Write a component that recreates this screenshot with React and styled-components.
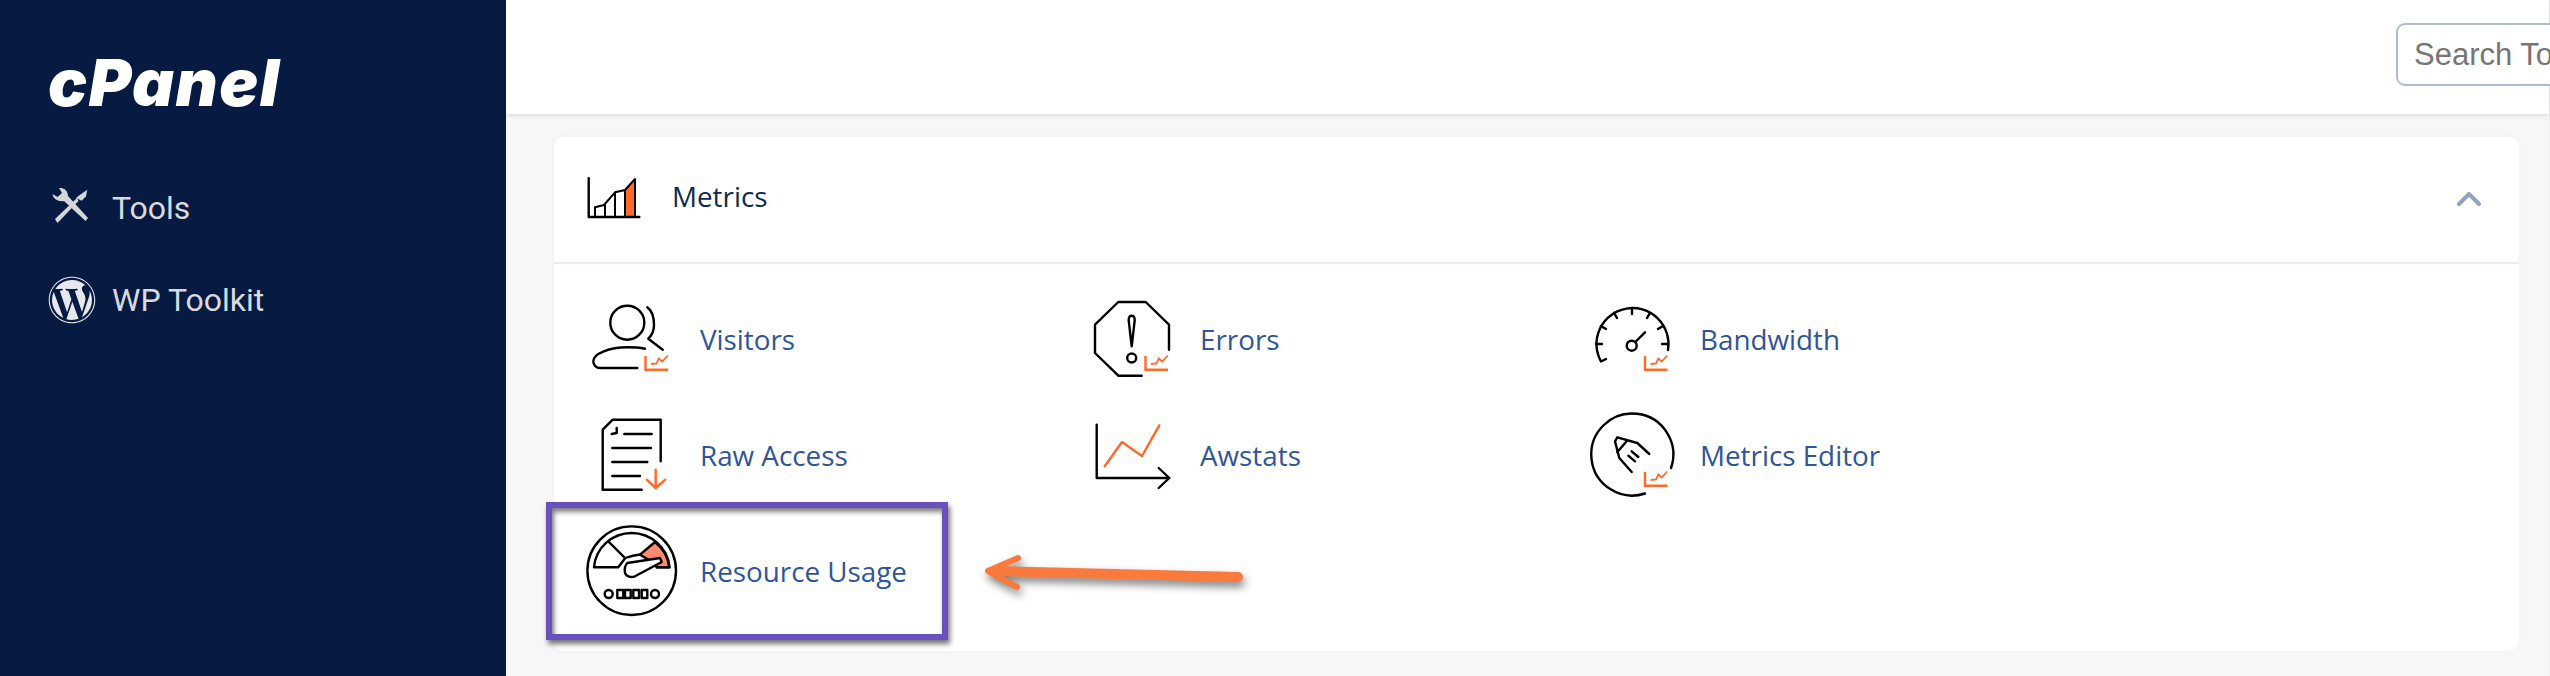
import React from "react";
import styled, { createGlobalStyle } from "styled-components";
import { FaWordpress } from "react-icons/fa";

const GlobalStyle = createGlobalStyle`
  html, body {
    margin: 0;
    padding: 0;
    background: #f7f7f8;
  }
`;

const Page = styled.div`
  display: flex;
  width: 2550px;
  height: 676px;
  overflow: hidden;
`;

const Sidebar = styled.aside`
  width: 506px;
  flex-shrink: 0;
  background: #061a42;
  padding: 48px 0 0 48px;
  box-sizing: border-box;
`;

const Logo = styled.div`
  font-family: "Inter", sans-serif;
  font-weight: 900;
  font-style: italic;
  font-size: 65px;
  line-height: 70px;
  letter-spacing: 1.5px;
  color: #fff;
  height: 70px;
  margin-bottom: 66px;
`;

const Nav = styled.nav`
  display: flex;
  flex-direction: column;
  gap: 44px;
`;

const NavItem = styled.a`
  display: flex;
  align-items: center;
  gap: 16px;
  height: 48px;
  font-family: "Roboto", sans-serif;
  font-size: 32px;
  color: #d9dadd;

  svg {
    width: 48px;
    height: 48px;
    flex-shrink: 0;
    fill: #e6e8ed;
  }
`;

const Main = styled.main`
  flex: 1;
  min-width: 0;
  display: flex;
  flex-direction: column;
  border-right: 1px solid #ececec;
`;

const TopBar = styled.header`
  height: 114px;
  flex-shrink: 0;
  background: #fff;
  box-shadow: 0 1px 5px rgba(0, 0, 0, 0.14);
  display: flex;
  align-items: flex-start;
  justify-content: flex-end;
  padding-top: 23px;
  box-sizing: border-box;
  position: relative;
`;

const Search = styled.input`
  width: 300px;
  height: 63px;
  margin-right: -147px;
  box-sizing: border-box;
  border: 2px solid #b0bcd4;
  border-radius: 9px;
  padding: 0 16px;
  font-family: "Liberation Sans", sans-serif;
  font-size: 31px;
  outline: none;
  background: #fff;
`;

const Content = styled.div`
  padding: 23px 30px 0 48px;
`;

const Card = styled.section`
  position: relative;
  background: #fff;
  border-radius: 9px;
  height: 514px;
  box-shadow: 0 0 4px rgba(0, 0, 0, 0.03);
`;

const CardHeader = styled.div`
  height: 127px;
  box-sizing: border-box;
  display: flex;
  align-items: center;
  padding: 0 38px 2px 26px;
  border-bottom: 2px solid #e6ebf5;
`;

const CardTitle = styled.h2`
  margin: -5px auto 0 32px;
  font-family: "Open Sans", sans-serif;
  font-weight: 400;
  font-size: 27.8px;
  color: #0e2a4f;
`;

const Grid = styled.div`
  display: grid;
  grid-template-columns: repeat(3, 500px);
  grid-auto-rows: 116px;
  padding: 16px 0 0 26px;
`;

const Item = styled.a`
  display: flex;
  align-items: center;
  gap: 20px;
  font-family: "Open Sans", sans-serif;
  font-size: 27.8px;
  color: #2f5597;
`;

const ItemLabel = styled.span`
  padding-top: 2px;
`;

const Icon = styled.svg`
  flex-shrink: 0;
  overflow: visible;
  fill: none;
  stroke: #000;
  stroke-width: 2.4;
  stroke-linecap: round;
  stroke-linejoin: round;
`;

const Orange = styled.g`
  stroke: #ff6a2b;
`;

const Highlight = styled.div`
  position: absolute;
  left: -8px;
  top: 365px;
  width: 402px;
  height: 138px;
  box-sizing: border-box;
  border: 6px solid #6a50bd;
  box-shadow: 2px 4px 5px rgba(0, 0, 0, 0.55), inset 2px 4px 5px rgba(0, 0, 0, 0.5);
  pointer-events: none;
`;

const Arrow = styled.svg`
  position: absolute;
  left: 421px;
  top: 400px;
  overflow: visible;
  filter: drop-shadow(2px 5px 4px rgba(0, 0, 0, 0.5));
`;

// the columns sit 500px apart, the drawings a little less, hence the start x
const box = (x = 0) => ({ width: 100, height: 80, viewBox: `${x} 0 100 80` });

// small trend chart in the corner of most of the metric icons
const Trend = ({ x = 0 }) => (
  <Orange transform={`translate(${x} 0)`} strokeLinecap="butt" strokeLinejoin="miter">
    <path d="M65.5 58v13.7h22.5" />
    <path d="M71 66l5.5-.7 2.3-4.8 3.4 3 5.6-6" strokeWidth="1.8" />
  </Orange>
);

const VisitorsIcon = () => (
  <Icon {...box()}>
    <circle cx="47.3" cy="24.7" r="17" />
    <path d="M67.3 9.3C72 13 74 19.5 74 26.7c0 5.5-2 10.5-5.7 14l14.4 11" />
    <path d="M65 50.7c-5-1-11-1.4-18-1.4-17 0-33.7 6-33.7 14 0 4 3 6.7 6.7 6.7h37.3" />
    <Trend />
  </Icon>
);

const ErrorsIcon = () => (
  <Icon {...box(1)}>
    <path d="M90 51.7V26.7L66.7 4H39.3L16 26.7V55l23.3 22.7h23.4" />
    <path d="M52.7 48.3l-3-26c0-6 6-6 6 0z" />
    <circle cx="52.7" cy="60" r="4.5" />
    <Trend x={1} />
  </Icon>
);

const gaugeTicks = [180, 150, 120, 90, 60, 30, 0].map((deg) => {
  const a = (deg * Math.PI) / 180;
  return {
    x1: 54 + 36 * Math.cos(a),
    y1: 46 - 36 * Math.sin(a),
    x2: 54 + 30 * Math.cos(a),
    y2: 46 - 30 * Math.sin(a),
  };
});

const BandwidthIcon = () => (
  <Icon {...box(2)}>
    <path d="M28 61l-5 2.5A36 36 0 1 1 90 52" />
    {gaugeTicks.map((t) => (
      <line key={t.x1} {...t} />
    ))}
    <circle cx="53.7" cy="47.7" r="5" />
    <path d="M57.3 44l9.7-9.7" />
    <Trend x={1.5} />
  </Icon>
);

const RawAccessIcon = () => (
  <Icon {...box()}>
    <path d="M80.7 47.3V5.7h-48l-10 10v60h39" />
    <path d="M36.7 14v5l-5 1M44.3 20h27.4M32.3 34H71M32.3 48h35M32.3 62H60" />
    <Orange>
      <path d="M75.7 55.7V74M66.7 65.7l9 8.3 9.6-8.3" />
    </Orange>
  </Icon>
);

const AwstatsIcon = () => (
  <Icon {...box(1)}>
    <path d="M17.7 10.7V64h72.6M79.7 54l10.6 10-10.6 10" />
    <Orange>
      <path d="M25.7 52.3L43 28l20 14 17.3-30.7" />
    </Orange>
  </Icon>
);

const EditorIcon = () => (
  <Icon {...box(2)}>
    <path d="M93 54A41 41 0 1 0 67 79.5" />
    <path d="M53.7 58L41.3 44 37 27.3l2.3-4 20 5.7 12 11" />
    <path d="M39.3 38l9.4-10.7M53.7 37.3l6.6 5.7M50.3 41.7l6.7 5.6" />
    <Trend x={1.5} />
  </Icon>
);

const ResourceIcon = () => (
  <Icon {...box()}>
    <path d="M75 12A38 38 0 0 1 89.3 37.3H76.7L75 33.5 60 24.7z" fill="#ff8a6e" />
    <circle cx="51.7" cy="40.7" r="44.3" />
    <path d="M76.7 37.3H89.6C88 18 71 3 51.7 3 32 3 15.5 18 14 37.3h24.3l7-9.3c4-1.5 9-3 15-3.5" />
    <path d="M28.3 11.3L45 28" />
    <path d="M47.3 33L80 28l1.7 4L55 46.3c-3.5 1.5-9 .5-10-3.5-.7-4 .5-8 2.3-9.8z" fill="#fff" />
    <circle cx="28.7" cy="64" r="4" />
    <circle cx="75" cy="64" r="4" />
    <path d="M37.3 60h6v8h-6zM45 60h5.7v8H45zM53.3 60H59v8h-5.7zM61.7 60h5.6v8h-5.6z" />
  </Icon>
);

const MetricsIcon = () => (
  <Icon width="60" height="60" viewBox="0 0 60 60">
    <path d="M45 21l10-11v38H45z" fill="#ff6a2b" stroke="none" />
    <path d="M8.7 9.3V48h50.6" />
    <path d="M15 48v-9.7l9-2.3 11-12.7L45 21l10-11v38M25 36v12M35 23.3V48M45 21v27" strokeWidth="2" />
  </Icon>
);

const ToolsIcon = () => (
  <svg viewBox="0 0 48 48">
    <g fill="#d5d6da">
      <path d="M11 4c4-.5 9 2 9 8l20 22-2.5 3-21.5-20c-5.5 1-11-2-11.5-7l5 3 4.500-4z" />
      <path d="M7 35l22-21 1.500 3-21 22z" />
      <path d="M28 14l4-3.300 7.300-5-1.300 6.600-4.300 4.400z" />
    </g>
  </svg>
);

const items = [
  { label: "Visitors", icon: VisitorsIcon },
  { label: "Errors", icon: ErrorsIcon },
  { label: "Bandwidth", icon: BandwidthIcon },
  { label: "Raw Access", icon: RawAccessIcon },
  { label: "Awstats", icon: AwstatsIcon },
  { label: "Metrics Editor", icon: EditorIcon },
  { label: "Resource Usage", icon: ResourceIcon },
];

export default function App() {
  return (
    <Page>
      <GlobalStyle />
      <Sidebar>
        <Logo>cPanel</Logo>
        <Nav>
          <NavItem>
            <ToolsIcon />
            Tools
          </NavItem>
          <NavItem>
            <FaWordpress />
            WP Toolkit
          </NavItem>
        </Nav>
      </Sidebar>
      <Main>
        <TopBar>
          <Search placeholder="Search Tools" />
        </TopBar>
        <Content>
          <Card>
            <CardHeader>
              <MetricsIcon />
              <CardTitle>Metrics</CardTitle>
              <svg width="24" height="14" viewBox="0 0 24 14" fill="none" stroke="#93a1bd" strokeWidth="4" strokeLinecap="round" strokeLinejoin="round">
                <path d="M2 12l10-10 10 10" />
              </svg>
            </CardHeader>
            <Grid>
              {items.map(({ label, icon: ItemIcon }) => (
                <Item key={label}>
                  <ItemIcon />
                  <ItemLabel>{label}</ItemLabel>
                </Item>
              ))}
            </Grid>
            <Highlight />
            <Arrow width="270" height="60" viewBox="0 0 270 60" fill="none" stroke="#f97a3c" strokeLinecap="round" strokeLinejoin="round">
              <path d="M263 40L20 34" strokeWidth="10" />
              <path d="M43 21L13 34l29 16" strokeWidth="6" />
            </Arrow>
          </Card>
        </Content>
      </Main>
    </Page>
  );
}
